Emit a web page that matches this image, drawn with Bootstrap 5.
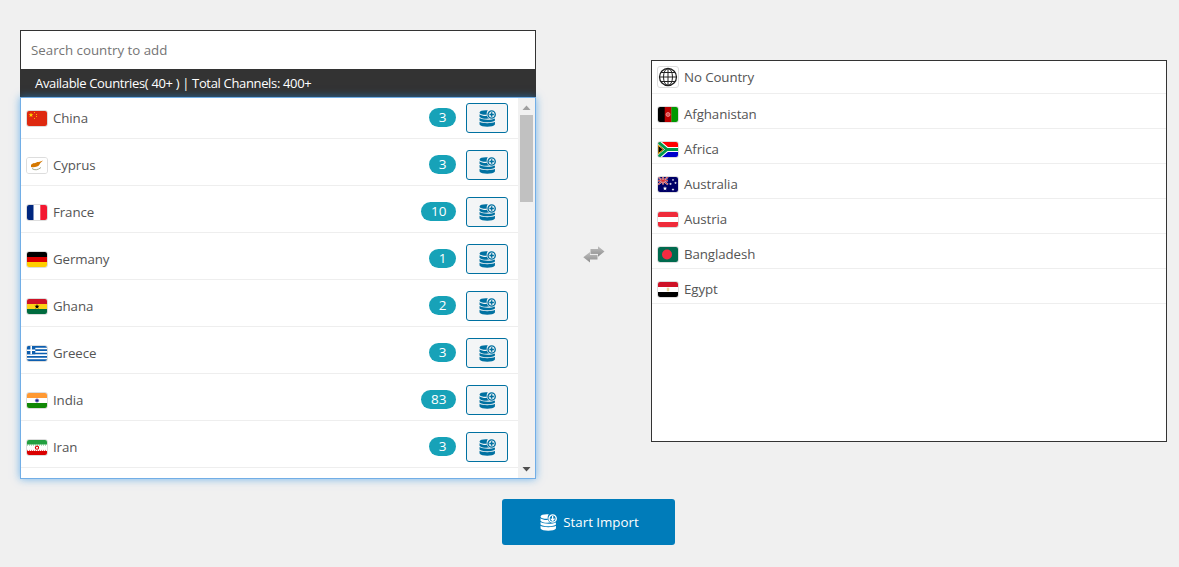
<!DOCTYPE html>
<html lang="en">
<head>
<meta charset="utf-8">
<meta name="viewport" content="width=device-width, initial-scale=1">
<title>Import channels</title>
<link href="https://cdn.jsdelivr.net/npm/bootstrap@5.3.0/dist/css/bootstrap.min.css" rel="stylesheet">
<style>
body{background:#f0f0f0;font-family:"Open Sans","Noto Sans",sans-serif;font-size:13.3px;line-height:18px;color:#555;height:567px;overflow:hidden;letter-spacing:-.1px}
.picker{width:516px}
.left-col{margin:30px 0 0 20px}
.right-col{margin-top:60px}
.swap{width:115px;padding-top:246px}
.search-input{height:39px;border:1px solid #333;border-bottom:0;border-radius:0;background:#fff;padding:0 10px;color:#444;font-size:13.3px;letter-spacing:0}
.search-input::placeholder{color:#757575}
.summary{height:28px;background:#333;color:#fff;padding:5px 15px 0;font-size:13px;letter-spacing:-.34px;font-weight:500}
.available{position:relative;height:382px;background:#fff;border:1px solid #72aee6;box-shadow:0 0 8px rgba(30,140,230,.6)}
.entry{padding:5px 10px 5px 5px;border-bottom:1px solid #eee;margin-bottom:6px;height:41px}
.picked{height:382px;background:#fff;border:1px solid #333}
.picked .entry{height:29px}
.picked .entry:first-child{height:33px}
.flag{width:22px;height:17px;border:1px solid #ddd;border-radius:3px;margin-right:5px;flex:none;display:block;overflow:hidden;background:#fff}
.globe{height:22px}
.available .flag{position:relative;top:.5px}
.count{background:#17a2b8;color:#fff;font-size:13.5px;line-height:19px;height:19px;padding:0 9.6px;border-radius:10px;margin:0 10px 1px 0;letter-spacing:0}
.add-btn{width:42px;height:30px;border:1px solid #0071a1;border-radius:3px;background:#f3f5f6;color:#0071a1;padding:0}
.bar{width:17px;background:#f1f1f1;flex:none}
.thumb{width:13px;height:87px;background:#c1c1c1;margin-top:5px}
.start{width:173px;height:46px;border-radius:3px;background:#007cba;color:#fff;margin:20px 0 0 502px;font-size:13.3px;border:0;padding:1px 0 0 2px}
</style>
</head>
<body>
<svg width="0" height="0" class="position-absolute">
<defs>
<symbol id="db" viewBox="0 0 16 16"><g fill="currentColor">
<path d="M8.300.3C4 0 .8.700.5 2.300c0 1.500 3.200 2.300 6.800 2.200C7.100 2.900 7.400 1.400 8.300.3z"/>
<path d="M.5 3.900v2.400C1.200 7.800 5 8.500 9.900 8.100 8.700 7.600 7.900 6.800 7.500 5.500 4.800 5.700 1.900 5.200.5 3.900z"/>
<path d="M.5 7.600v2.200c1.500 2.200 13 2.200 14.500 0V7.900c-3 1.700-11.500 1.700-14.500-.3z"/>
<path d="M.5 11.100v2.500c1.500 2.800 13 2.800 14.500 0v-2.500c-3 1.800-11.500 1.800-14.500 0z"/></g>
<circle cx="11.900" cy="4.200" r="3.400" fill="none" stroke="currentColor" stroke-width="1.300"/>
</symbol>
<symbol id="dbplus" viewBox="0 0 16 16"><use href="#db"/><path d="M11.900 2.100v4.200M9.800 4.200H14" stroke="currentColor" stroke-width="1.400"/></symbol>
<symbol id="dbdown" viewBox="0 0 16 16"><use href="#db"/><path d="M11.900 1.900v4.200M10.100 4.300l1.800 1.900 1.800-1.900" fill="none" stroke="currentColor" stroke-width="1.200"/></symbol>
<path id="star" d="M0-1 .24-.31.95-.31.38.12.59.81 0 .4-.59.81-.38.12-.95-.31-.24-.31z"/>
<linearGradient id="grey" x2="0" y2="1"><stop stop-color="#c0c0c0"/><stop offset="1" stop-color="#8d8d8d"/></linearGradient>
</defs>
</svg>
<main>
<div class="d-flex align-items-start">
<section class="left-col picker">
<input class="form-control search-input" placeholder="Search country to add">
<div class="summary">Available Countries( 40+ ) | Total Channels: 400+</div>
<div class="available d-flex overflow-visible">
<div class="flex-grow-1 overflow-hidden">
<div class="entry d-flex align-items-center"><svg class="flag" viewBox="0 0 20 15"><path fill="#de2910" d="M0 0h20v15H0z"/><use href="#star" fill="#ffde00" transform="translate(4 4) scale(2.500)"/><path fill="#ffb000" d="M7 1h1v1H7zM9 3h1v1H9zM9 5h1v1H9zM7 7h1v1H7z"/></svg><span>China</span><span class="count ms-auto">3</span><button class="btn add-btn d-flex align-items-center justify-content-center"><svg width="17" height="17"><use href="#dbplus"/></svg></button></div>
<div class="entry d-flex align-items-center"><svg class="flag" viewBox="0 0 20 15"><path fill="#fff" d="M0 0h20v15H0z"/><path fill="#d57800" d="M4 7c1.500-2.500 5-1.500 6-3 2 0 3-.5 6-1.500-2 2-2.500 2-3.500 4C11.500 9 7 9.500 4 9z"/><path d="M5 10.500q4 3 9-1" fill="none" stroke="#a4aa8a" stroke-width="1"/></svg><span>Cyprus</span><span class="count ms-auto">3</span><button class="btn add-btn d-flex align-items-center justify-content-center"><svg width="17" height="17"><use href="#dbplus"/></svg></button></div>
<div class="entry d-flex align-items-center"><svg class="flag" viewBox="0 0 20 15"><path fill="#00267f" d="M0 0h6.500v15H0z"/><path fill="#f31830" d="M13.300 0H20v15h-6.700z"/></svg><span>France</span><span class="count ms-auto">10</span><button class="btn add-btn d-flex align-items-center justify-content-center"><svg width="17" height="17"><use href="#dbplus"/></svg></button></div>
<div class="entry d-flex align-items-center"><svg class="flag" viewBox="0 0 20 15"><path d="M0 0h20v5H0z"/><path fill="#d00" d="M0 5h20v5H0z"/><path fill="#ffce00" d="M0 10h20v5H0z"/></svg><span>Germany</span><span class="count ms-auto">1</span><button class="btn add-btn d-flex align-items-center justify-content-center"><svg width="17" height="17"><use href="#dbplus"/></svg></button></div>
<div class="entry d-flex align-items-center"><svg class="flag" viewBox="0 0 20 15"><path fill="#ce1126" d="M0 0h20v5H0z"/><path fill="#fcd116" d="M0 5h20v5H0z"/><path fill="#006b3f" d="M0 10h20v5H0z"/><use href="#star" transform="translate(10 7.600) scale(2.700)"/></svg><span>Ghana</span><span class="count ms-auto">2</span><button class="btn add-btn d-flex align-items-center justify-content-center"><svg width="17" height="17"><use href="#dbplus"/></svg></button></div>
<div class="entry d-flex align-items-center"><svg class="flag" viewBox="0 0 20 15"><path d="M0 .8h20M0 4.200h20M0 7.500h20M0 10.800h20M0 14.200h20" stroke="#0d5eaf" stroke-width="1.700"/><path fill="#0d5eaf" d="M0 0h8.300v8.300H0z"/><path d="M4.200 0v8.300M0 4.200h8.300" stroke="#fff" stroke-width="1.600"/></svg><span>Greece</span><span class="count ms-auto">3</span><button class="btn add-btn d-flex align-items-center justify-content-center"><svg width="17" height="17"><use href="#dbplus"/></svg></button></div>
<div class="entry d-flex align-items-center"><svg class="flag" viewBox="0 0 20 15"><path fill="#f93" d="M0 0h20v5H0z"/><path fill="#128807" d="M0 10h20v5H0z"/><circle cx="10" cy="7.500" r="1.600" fill="#228" stroke="#66b" stroke-width=".8"/></svg><span>India</span><span class="count ms-auto">83</span><button class="btn add-btn d-flex align-items-center justify-content-center"><svg width="17" height="17"><use href="#dbplus"/></svg></button></div>
<div class="entry d-flex align-items-center"><svg class="flag" viewBox="0 0 20 15"><path fill="#239f40" d="M0 0h20v4.600H0z"/><path fill="#da0000" d="M0 10.900h20V15H0z"/><path d="M0 5.100h20" stroke="#239f40" stroke-dasharray="1 1" opacity=".6"/><path d="M0 10.400h20" stroke="#da0000" stroke-dasharray="1 1" opacity=".6"/><circle cx="10" cy="7.700" r="1.600" fill="none" stroke="#da0000" stroke-width="1.100"/></svg><span>Iran</span><span class="count ms-auto">3</span><button class="btn add-btn d-flex align-items-center justify-content-center"><svg width="17" height="17"><use href="#dbplus"/></svg></button></div>
</div>
<div class="bar d-flex flex-column align-items-center">
<svg width="9" height="5" class="flex-shrink-0" style="margin-top:7px"><path d="M.5 5 4.500.5 8.500 5z" fill="#a0a0a0"/></svg>
<div class="thumb"></div>
<svg width="9" height="5" class="flex-shrink-0 mt-auto" style="margin-bottom:6px"><path d="M.5 0h8l-4 4.500z" fill="#505050"/></svg>
</div>
</div>
</section>
<div class="swap d-flex justify-content-center">
<svg width="22" height="17" class="flex-shrink-0"><path d="M7.500 3H15V.3L21.500 5.500 15 10.700V8H7.500z" fill="url(#grey)"/><path d="M14.500 8.800H7V6L.3 11.200 7 16.500V13.500h7.500z" fill="url(#grey)"/><path d="M7 8.400h8" stroke="#f0f0f0" stroke-width=".7"/></svg>
</div>
<section class="right-col picker">
<div class="picked">
<div class="entry d-flex align-items-center"><svg class="flag globe" viewBox="0 0 20 20"><g fill="none" stroke="#222" stroke-width="1"><circle cx="10" cy="10" r="8.500" stroke-width="1.300"/><ellipse cx="10" cy="10" rx="4.500" ry="8.500"/><path d="M10 1.500v17M1.500 10h17M3 5.500h14M3 14.500h14"/></g></svg><span>No Country</span></div>
<div class="entry d-flex align-items-center"><svg class="flag" viewBox="0 0 20 15"><path d="M0 0h7v15H0z"/><path fill="#b00" d="M6.700 0h7v15h-7z"/><path fill="#009900" d="M13.400 0H20v15h-6.600z"/><circle cx="10" cy="7.500" r="2" fill="#d55" stroke="#e99" stroke-width=".8"/></svg><span>Afghanistan</span></div>
<div class="entry d-flex align-items-center"><svg class="flag" viewBox="0 0 20 15"><path fill="red" d="M0 0h20v7H0z"/><path fill="#00c" d="M0 8h20v7H0z"/><path d="M-1-1 9 7.500-1 16M9 7.500h12" fill="none" stroke="#fff" stroke-width="5"/><path fill="#000" d="M0 2.500 6 7.500 0 12.500z"/><path d="M-1-1 9 7.500-1 16M9 7.500h12" fill="none" stroke="#009a49" stroke-width="2.900"/><path d="M0 3.200 5.200 7.500 0 11.800z" stroke="#fcb514" stroke-width="1"/></svg><span>Africa</span></div>
<div class="entry d-flex align-items-center"><svg class="flag" viewBox="0 0 20 15"><path fill="#006" d="M0 0h20v15H0z"/><path d="M0 0 10 7.500M10 0 0 7.500M5 0v7.500M0 3.700h10" stroke="#ccd" stroke-width="1.700"/><path d="M0 0 10 7.500M10 0 0 7.500M5 0v7.500M0 3.700h10" stroke="#d33" stroke-width="1"/><g fill="#fff"><use href="#star" transform="translate(7 11.500) scale(2.300)"/><use href="#star" transform="translate(15 3) scale(1.300)"/><use href="#star" transform="translate(12.500 7) scale(1.500)"/><use href="#star" transform="translate(17.500 6) scale(1.400)"/><use href="#star" transform="translate(15 12.500) scale(1.500)"/></g></svg><span>Australia</span></div>
<div class="entry d-flex align-items-center"><svg class="flag" viewBox="0 0 20 15"><path fill="#ef2b3a" d="M0 0h20v5H0zM0 10h20v5H0z"/></svg><span>Austria</span></div>
<div class="entry d-flex align-items-center"><svg class="flag" viewBox="0 0 20 15"><path fill="#006a4e" d="M0 0h20v15H0z"/><circle cx="9" cy="7.500" r="5" fill="#f42a41"/></svg><span>Bangladesh</span></div>
<div class="entry d-flex align-items-center"><svg class="flag" viewBox="0 0 20 15"><path fill="#ce1126" d="M0 0h20v5H0z"/><path d="M0 10h20v5H0z"/><path fill="#e8d8a0" d="M8.800 5.800h2.400v3.500H8.800z"/></svg><span>Egypt</span></div>
</div>
</section>
</div>
<button class="btn start d-flex align-items-center justify-content-center"><svg width="17" height="17" style="margin-right:6px"><use href="#dbdown"/></svg><span>Start Import</span></button>
</main>
</body>
</html>
